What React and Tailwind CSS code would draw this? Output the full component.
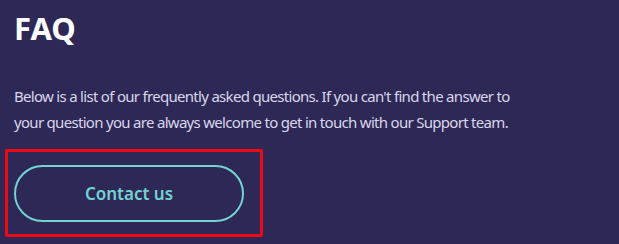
export default function App() {
  return (
    <div className="w-[619px] h-[244px] overflow-hidden bg-[#2e2857] font-['Noto_Sans',sans-serif]">
      <h1 className="pl-[14px] pt-[9px] text-[31px] leading-[38px] font-bold text-white">
        FAQ
      </h1>
      <p className="mt-[36px] pl-[14px] w-[540px] text-[15px] leading-[26px] tracking-[-0.7px] text-[#d9d7ea]">
        Below is a list of our frequently asked questions. If you can't find the answer to your question you are always welcome to get in touch with our Support team.
      </p>
      <div className="mt-[14px] ml-[5px] w-[258px] h-[88px] border-[3px] border-[#ee0a14] rounded-[2px] pl-[6px] pt-[13px]">
        <button className="w-[230px] h-[57px] rounded-full border-2 border-[#74d3d0] text-[#74d3d0] text-[17px] font-semibold">
          Contact us
        </button>
      </div>
    </div>
  );
}
